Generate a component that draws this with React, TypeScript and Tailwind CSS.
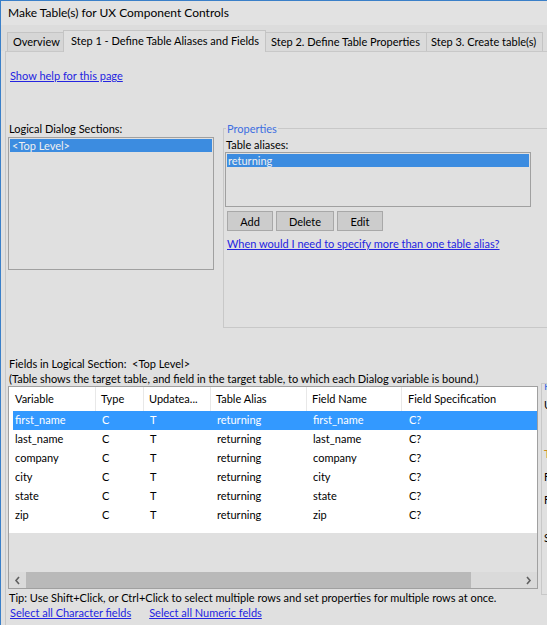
import React from "react";

const rows = [
  { v: "first_name", t: "C", u: "T", a: "returning", f: "first_name", s: "C?" },
  { v: "last_name", t: "C", u: "T", a: "returning", f: "last_name", s: "C?" },
  { v: "company", t: "C", u: "T", a: "returning", f: "company", s: "C?" },
  { v: "city", t: "C", u: "T", a: "returning", f: "city", s: "C?" },
  { v: "state", t: "C", u: "T", a: "returning", f: "state", s: "C?" },
  { v: "zip", t: "C", u: "T", a: "returning", f: "zip", s: "C?" },
];

function Chevron({ dir }: { dir: "left" | "right" }) {
  return (
    <svg width="7" height="9" viewBox="0 0 7 9">
      {dir === "left" ? (
        <path d="M5 1 L2 4.5 L5 8" fill="none" stroke="#606060" strokeWidth="1.6" />
      ) : (
        <path d="M2 1 L5 4.5 L2 8" fill="none" stroke="#606060" strokeWidth="1.6" />
      )}
    </svg>
  );
}

export default function App() {
  return (
    <div className="w-[547px] h-[625px] overflow-hidden bg-[#e0e0e0] border-l border-t border-[#3a7fc8] font-['Lato',sans-serif] text-[11px] text-black flex flex-col">
      {/* title bar */}
      <div className="h-[24px] shrink-0 flex items-center pl-[7px] text-[12px] bg-[#e2e2e2] whitespace-nowrap">
        Make Table(s) for UX Component Controls
      </div>

      {/* tab strip */}
      <div className="h-[26px] shrink-0 flex items-end pl-[6px] bg-[#dcdcdc] whitespace-nowrap">
        <div className="shrink-0 w-[56px] h-[19px] flex items-center pl-[5px] border-l border-t border-[#c4c4c4] bg-[#d6d6d6]">
          Overview
        </div>
        <div className="shrink-0 w-[203px] relative z-10 -mb-px h-[22px] flex items-center pl-[7px] border-l border-t border-r border-[#c4c4c4] bg-[#e0e0e0]">
          Step 1 - Define Table Aliases and Fields
        </div>
        <div className="shrink-0 w-[161px] h-[19px] flex items-center pl-[5px] border-t border-r border-[#c4c4c4] bg-[#dadada]">
          Step 2. Define Table Properties
        </div>
        <div className="shrink-0 w-[116px] h-[19px] flex items-center pl-[4px] border-t border-r border-[#c4c4c4] bg-[#dadada]">
          Step 3. Create table(s)
        </div>
      </div>

      {/* tab page */}
      <div className="flex-1 ml-[4px] border-l border-t border-[#c8c8c8] flex flex-col">
        <div className="mt-[16px] h-[15px] leading-[15px] pl-[4px]">
          <span className="text-[#2424e0] underline">Show help for this page</span>
        </div>

        <div className="mt-[38px] flex items-start">
          <div className="shrink-0 ml-[2px] flex flex-col">
            <div className="h-[16px] leading-[16px] pl-[1px]">Logical Dialog Sections:</div>
            <div className="w-[206px] h-[133px] border border-[#a0a0a0] bg-[#e0e0e0] p-px">
              <div className="h-[13px] leading-[13px] bg-[#3c8ce0] text-[#f0f0f0] pl-[2px]">&lt;Top Level&gt;</div>
            </div>
          </div>

          <fieldset className="shrink-0 ml-[9px] w-[340px] h-[207px] border border-[#c8c8c8] pl-px">
            <legend className="ml-px px-px h-[14px] leading-[16px] text-[#3c6ee0]">Properties</legend>
            <div className="h-[17px] leading-[20px] pl-px">Table aliases:</div>
            <div className="w-[306px] h-[55px] border border-[#a0a0a0] bg-[#e0e0e0] p-px">
              <div className="h-[13px] leading-[13px] bg-[#3c8ce0] text-[#f0f0f0] pl-px">returning</div>
            </div>
            <div className="mt-[4px] ml-[2px] flex gap-[3px]">
              <button className="w-[46px] h-[20px] bg-[#cccccc] border border-[#a8a8a8] leading-none">Add</button>
              <button className="w-[58px] h-[20px] bg-[#cccccc] border border-[#a8a8a8] leading-none">Delete</button>
              <button className="w-[46px] h-[20px] bg-[#cccccc] border border-[#a8a8a8] leading-none">Edit</button>
            </div>
            <div className="mt-[5px] ml-[2px] h-[15px] leading-[15px] whitespace-nowrap">
              <span className="text-[#2424e0] underline">When would I need to specify more than one table alias?</span>
            </div>
          </fieldset>
        </div>

        <div className="mt-[28px] h-[15px] leading-[15px] pl-[3px] whitespace-pre">Fields in Logical Section:  &lt;Top Level&gt;</div>
        <div className="h-[15px] leading-[15px] pl-[3px] whitespace-nowrap">
          (Table shows the target table, and field in the target table, to which each Dialog variable is bound.)
        </div>

        {/* grid + side panel */}
        <div className="h-[206px] -mt-[3px] flex items-start">
          <div className="shrink-0 ml-[2px] mt-[3px] w-[530px] h-[203px] border border-[#a0a0a0] flex flex-col whitespace-nowrap">
            <div className="bg-white flex flex-col">
              <div className="h-[24px] flex items-stretch">
                <div className="w-[87px] pl-[6px] flex items-center border-r border-[#e8e8e8]">Variable</div>
                <div className="w-[48px] pl-[5px] flex items-center border-r border-[#e8e8e8]">Type</div>
                <div className="w-[67px] pl-[5px] flex items-center border-r border-[#e8e8e8]">Updatea...</div>
                <div className="w-[96px] pl-[5px] flex items-center border-r border-[#e8e8e8]">Table Alias</div>
                <div className="w-[95px] pl-[5px] flex items-center border-r border-[#e8e8e8]">Field Name</div>
                <div className="flex-1 pl-[6px] flex items-center">Field Specification</div>
              </div>
              {rows.map((r, i) => (
                <div
                  key={r.v}
                  className={
                    "ml-[4px] h-[19px] flex items-center " +
                    (i === 0 ? "bg-[#3399ff] text-white" : "")
                  }
                >
                  <div className="w-[83px] pl-[2px]">{r.v}</div>
                  <div className="w-[48px] pl-[6px]">{r.t}</div>
                  <div className="w-[67px] pl-[6px]">{r.u}</div>
                  <div className="w-[96px] pl-[6px]">{r.a}</div>
                  <div className="w-[95px] pl-[6px]">{r.f}</div>
                  <div className="flex-1 pl-[7px]">{r.s}</div>
                </div>
              ))}
              <div className="h-[8px]" />
            </div>
            <div className="flex-1 bg-[#e0e0e0]" />
            <div className="h-[16px] flex bg-[#dadada]">
              <div className="w-[17px] flex items-center justify-center">
                <Chevron dir="left" />
              </div>
              <div className="w-[445px] bg-[#b9b9b9]" />
              <div className="flex-1" />
              <div className="w-[17px] flex items-center justify-center">
                <Chevron dir="right" />
              </div>
            </div>
          </div>

          <div className="ml-[3px] flex-1 min-w-0 h-[212px] border-l border-t border-b border-[#c8c8c8] pl-[2px] flex flex-col whitespace-nowrap overflow-hidden">
            <div className="h-[15px] leading-[15px] text-[#3c6ee0] -mt-[6px]">Properties</div>
            <div className="mt-[4px] h-[15px] leading-[15px]">Updateable</div>
            <div className="mt-[34px] h-[15px] leading-[15px] text-[#c88a1e]">Table</div>
            <div className="mt-[8px] h-[15px] leading-[15px]">Field name</div>
            <div className="mt-[8px] h-[15px] leading-[15px]">Field spec</div>
            <div className="mt-[23px] h-[15px] leading-[15px]">Size</div>
          </div>
        </div>

        <div className="mt-px h-[15px] leading-[15px] pl-[3px] whitespace-nowrap">
          Tip: Use Shift+Click, or Ctrl+Click to select multiple rows and set properties for multiple rows at once.
        </div>
        <div className="h-[15px] leading-[15px] pl-[4px] flex whitespace-nowrap">
          <span className="text-[#2424e0] underline">Select all Character fields</span>
          <span className="ml-[18px] text-[#2424e0] underline">Select all Numeric felds</span>
        </div>
      </div>
    </div>
  );
}
